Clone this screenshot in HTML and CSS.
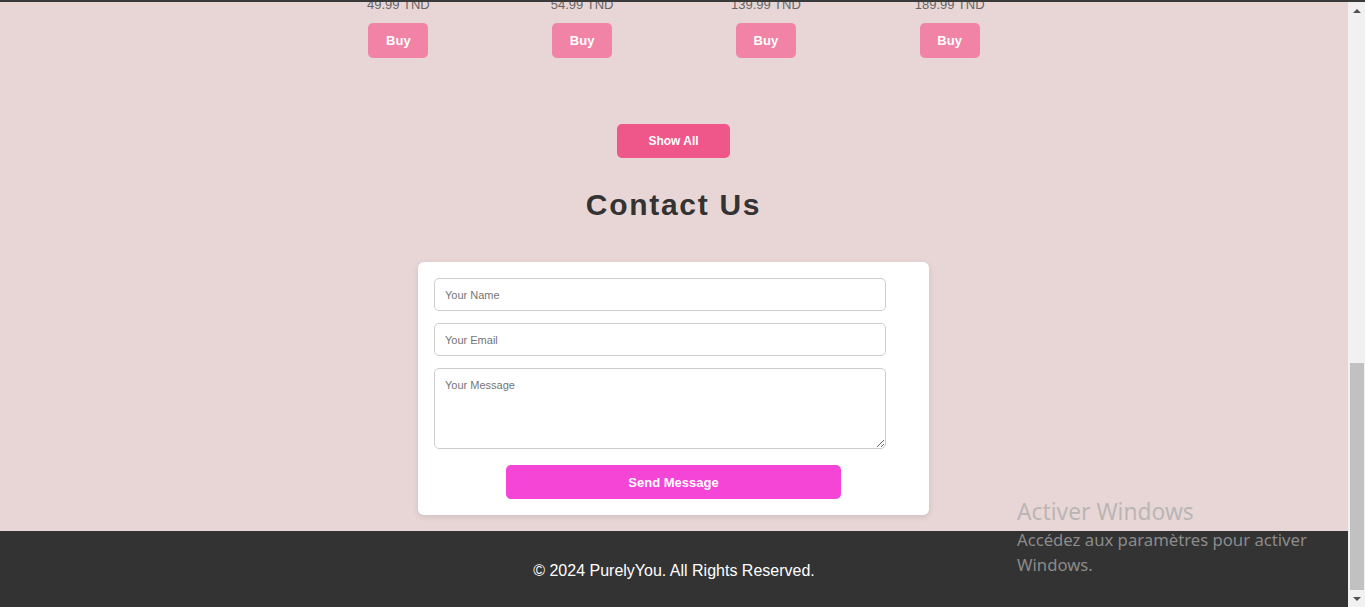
FILE: index.html
```html
<!DOCTYPE html>
<html lang="fr">
<head>
<meta charset="utf-8">
<title>PurelyYou</title>
<link rel="stylesheet" href="styles.css">
</head>
<body>
<div class="top-line"></div>
<div class="viewport">
  <div class="page">
    <section class="products">
      <div class="product"><p class="price">49.99 TND</p><button class="buy">Buy</button></div>
      <div class="product"><p class="price">54.99 TND</p><button class="buy">Buy</button></div>
      <div class="product"><p class="price">139.99 TND</p><button class="buy">Buy</button></div>
      <div class="product"><p class="price">189.99 TND</p><button class="buy">Buy</button></div>
    </section>
    <div class="show-all-wrap"><button class="show-all">Show All</button></div>
    <section class="contact">
      <h2 class="contact-title">Contact Us</h2>
      <form class="contact-card">
        <input class="field" type="text" placeholder="Your Name">
        <input class="field" type="email" placeholder="Your Email">
        <textarea class="field area" placeholder="Your Message"></textarea>
        <button class="send" type="button">Send Message</button>
      </form>
    </section>
    <footer class="footer"><p class="footer-text">© 2024 PurelyYou. All Rights Reserved.</p></footer>
  </div>
  <div class="scrollbar">
    <div class="sb-btn"><span class="arrow-up"></span></div>
    <div class="sb-track"></div>
    <div class="sb-thumb"></div>
    <div class="sb-btn"><span class="arrow-down"></span></div>
  </div>
</div>
<div class="watermark">
  <div class="wm-title">Activer Windows</div>
  <div class="wm-text">Accédez aux paramètres pour activer Windows.</div>
</div>
</body>
</html>
```
FILE: styles.css
```css
* { box-sizing: border-box; }
html, body { margin: 0; padding: 0; }
body {
  width: 1365px;
  height: 607px;
  overflow: hidden;
  font-family: "Liberation Sans", Arial, sans-serif;
  background: #e8d6d6;
  position: relative;
}
.top-line {
  height: 2px;
  background: #3a3a3a;
  position: relative;
  z-index: 2;
}
.viewport {
  display: flex;
  height: 605px;
}
.page {
  flex: 1;
  display: flex;
  flex-direction: column;
  overflow: hidden;
  background: #e8d6d6;
}
.products {
  margin: -5px auto 0;
  width: 735px;
  display: grid;
  grid-template-columns: repeat(4, 1fr);
}
.product {
  display: flex;
  flex-direction: column;
  align-items: center;
}
.price {
  margin: 0;
  font-size: 13px;
  line-height: 15px;
  color: #666;
}
.buy {
  margin-top: 11px;
  width: 60px;
  height: 35px;
  padding: 0;
  border: none;
  border-radius: 5px;
  background: #f083a6;
  color: #fff;
  font-family: inherit;
  font-weight: bold;
  font-size: 13px;
}
.show-all-wrap {
  display: flex;
  justify-content: center;
  margin-top: 66px;
  padding-right: 1px;
}
.show-all {
  width: 113px;
  height: 34px;
  border: none;
  border-radius: 5px;
  background: #ef5689;
  color: #fff;
  font-family: inherit;
  font-weight: bold;
  font-size: 12px;
}
.contact {
  display: flex;
  flex-direction: column;
  align-items: center;
  padding-right: 1px;
}
.contact-title {
  margin: 29px 0 0;
  font-size: 30px;
  line-height: 36px;
  letter-spacing: 1.7px;
  color: #333;
  font-weight: bold;
}
.contact-card {
  margin-top: 39px;
  width: 511px;
  padding: 16px;
  background: #fff;
  border-radius: 6px;
  box-shadow: 0 2px 6px rgba(0, 0, 0, 0.1);
  display: flex;
  flex-direction: column;
  gap: 12px;
}
.field {
  width: 452px;
  height: 33px;
  padding: 0 10px;
  border: 1px solid #ccc;
  border-radius: 5px;
  font-family: inherit;
  font-size: 11px;
  color: #333;
  background: #fff;
}
.field::placeholder { color: #757575; }
.area {
  height: 81px;
  padding: 10px;
  line-height: 13px;
  resize: vertical;
}
.send {
  margin-top: 4px;
  align-self: center;
  width: 70%;
  height: 34px;
  border: none;
  border-radius: 5px;
  background: #f545d7;
  color: #fff;
  font-family: inherit;
  font-weight: bold;
  font-size: 13px;
}
.footer {
  margin-top: 16px;
  height: 76px;
  padding-top: 4px;
  background: #333;
  display: flex;
  align-items: center;
  justify-content: center;
}
.footer-text {
  margin: 0;
  color: #fff;
  font-size: 16px;
  line-height: 18px;
}
.scrollbar {
  width: 17px;
  background: #f1f1f1;
  display: flex;
  flex-direction: column;
}
.sb-btn {
  height: 17px;
  display: flex;
  align-items: center;
  justify-content: center;
}
.sb-track { flex: 1; }
.sb-thumb {
  height: 227px;
  margin: 0 1px 0 2px;
  background: #c1c1c1;
}
.arrow-up {
  width: 0; height: 0;
  border-left: 4px solid transparent;
  border-right: 4px solid transparent;
  border-bottom: 4px solid #505050;
}
.arrow-down {
  width: 0; height: 0;
  border-left: 4px solid transparent;
  border-right: 4px solid transparent;
  border-top: 4px solid #505050;
}
.watermark {
  position: absolute;
  left: 1017px;
  top: 497px;
  width: 305px;
  font-family: "Noto Sans", "Open Sans", sans-serif;
  color: rgba(170, 170, 170, 0.75);
  pointer-events: none;
}
.wm-title {
  font-size: 22.8px;
  line-height: 30px;
  margin-bottom: 0;
}
.wm-text {
  font-size: 16.7px;
  line-height: 25px;
}
```
